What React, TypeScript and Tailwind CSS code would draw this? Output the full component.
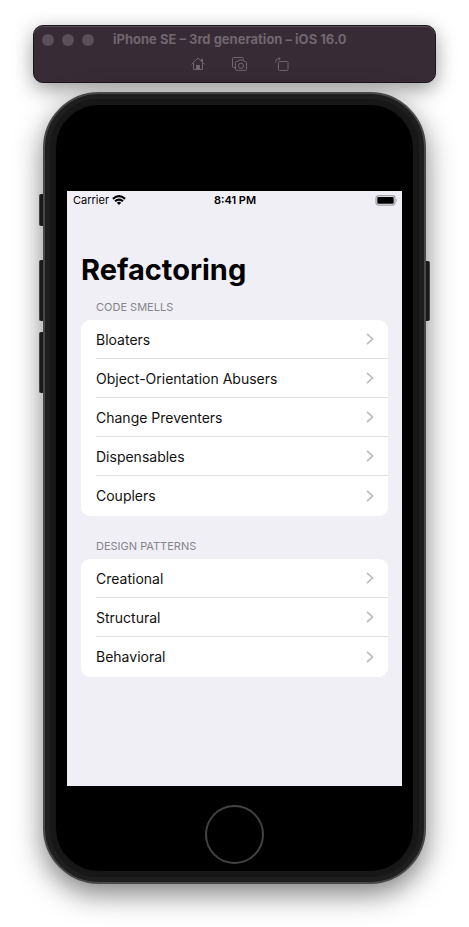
import React from "react";

type Section = { title: string; items: string[] };

const sections: Section[] = [
  {
    title: "Code Smells",
    items: [
      "Bloaters",
      "Object-Orientation Abusers",
      "Change Preventers",
      "Dispensables",
      "Couplers",
    ],
  },
  { title: "Design Patterns", items: ["Creational", "Structural", "Behavioral"] },
];

function HomeIcon() {
  return (
    <svg width="14" height="14" viewBox="0 0 14 14" fill="none" stroke="currentColor" strokeWidth="1">
      <path d="M0.7 7 L7 1 L13.3 7" strokeLinecap="round" strokeLinejoin="round" />
      <path d="M2.5 5.8 V12.5 H11.5 V5.8 M11.5 5 V2.2 H10.5 V4" />
      <path d="M5.5 12.5 V8.5 H8.5 V12.5 Z" fill="currentColor" />
    </svg>
  );
}

function ScreenshotIcon() {
  return (
    <svg width="16" height="14" viewBox="0 0 16 14" fill="none" stroke="currentColor" strokeWidth="1">
      <path d="M3 10.5 H1.5 Q0.5 10.5 0.5 9.5 V1.5 Q0.5 0.5 1.5 0.5 H10.5 Q11.5 0.5 11.5 1.5 V2.5" />
      <path d="M4.5 4.5 H6 L7 3 H11 L12 4.5 H13.5 Q14.5 4.5 14.5 5.5 V12.3 Q14.5 13.3 13.5 13.3 H4.5 Q3.5 13.3 3.5 12.3 V5.5 Q3.5 4.5 4.5 4.5 Z" />
      <circle cx="9" cy="8.8" r="2.6" />
    </svg>
  );
}

function RotateIcon() {
  return (
    <svg width="14" height="14" viewBox="0 0 14 14" fill="none" stroke="currentColor" strokeWidth="1">
      <rect x="3.5" y="4.5" width="9.5" height="9" rx="1" />
      <path d="M0.6 5.5 V4.5 Q0.6 1.8 3.3 1.8 H5" />
      <path d="M3.6 0 L5.8 1.8 L3.6 3.6 Z" fill="currentColor" stroke="none" />
    </svg>
  );
}

function WifiIcon() {
  return (
    <svg width="14" height="10" viewBox="0 0 14 10" fill="none" stroke="#000" strokeWidth="2.1">
      <path d="M0.9 3.9 Q7 -1.5 13.1 3.9" />
      <path d="M3 6.3 Q7 2.9 11 6.3" />
      <path d="M4.8 7.7 Q7 5.9 9.2 7.7 L7 10 Z" fill="#000" stroke="none" />
    </svg>
  );
}

function BatteryIcon() {
  return (
    <svg width="22" height="11" viewBox="0 0 22 11">
      <rect x="1" y="0.7" width="19" height="9.4" rx="2.6" fill="none" stroke="#a3a3a6" strokeWidth="1.3" />
      <rect x="2.3" y="2" width="16.4" height="6.8" rx="1" fill="#000" />
      <path d="M21 3.6 Q22.4 5.4 21 7.2 Z" fill="#a3a3a6" />
    </svg>
  );
}

function Chevron() {
  return (
    <svg width="8" height="12" viewBox="0 0 8 12" fill="none" stroke="#b9b9bc" strokeWidth="1.6">
      <path d="M1.5 1.3 L6.6 6 L1.5 10.7" strokeLinecap="round" strokeLinejoin="round" />
    </svg>
  );
}

function SimulatorToolbar() {
  return (
    <header className="h-[58px] rounded-[10px] border border-[#1b181b] bg-[#372b35] text-[#72666f] shadow-[inset_0_1px_0_#574d55,0_6px_20px_rgba(0,0,0,0.4)]">
      <div className="flex h-7 items-center pl-2">
        <div className="flex gap-2">
          <button aria-label="Close" className="size-3 rounded-full bg-[#5b4f59]" />
          <button aria-label="Minimize" className="size-3 rounded-full bg-[#5b4f59]" />
          <button aria-label="Zoom" className="size-3 rounded-full bg-[#5b4f59]" />
        </div>
        <h1 className="ml-[19px] text-[13px] font-bold whitespace-nowrap">
          iPhone SE – 3rd generation – iOS 16.0
        </h1>
      </div>
      <div className="flex h-5 items-center justify-center gap-[27px] pl-[11px]">
        <button aria-label="Home"><HomeIcon /></button>
        <button aria-label="Save screen"><ScreenshotIcon /></button>
        <button aria-label="Rotate"><RotateIcon /></button>
      </div>
    </header>
  );
}

function SectionList({ title, items }: Section) {
  return (
    <section className="mb-[21px]">
      <h3 className="h-[22px] pl-[15px] text-[11px] leading-[18px] text-[#85858b] uppercase">{title}</h3>
      <ul className="overflow-hidden rounded-[9px] bg-white pb-px">
        {items.map((item, i) => (
          <li key={item} className="pl-[15px]">
            <a
              href="#"
              className={`flex h-[39px] items-center justify-between pr-[14px] text-[14px] text-[#111] ${
                i < items.length - 1 ? "border-b border-[#e1e1e3]" : ""
              }`}
            >
              {item}
              <Chevron />
            </a>
          </li>
        ))}
      </ul>
    </section>
  );
}

function Screen() {
  return (
    <main className="h-[595px] bg-[#f0eff5] text-black">
      <div className="grid h-[18px] grid-cols-3 items-center pr-[5px] pl-[6px] text-[11px]">
        <span className="flex items-center gap-[3px]">
          Carrier <WifiIcon />
        </span>
        <span className="text-center font-semibold">8:41 PM</span>
        <span className="flex justify-end"><BatteryIcon /></span>
      </div>
      <div className="px-[14px] pt-[41px]">
        <h2 className="mb-2 text-[29px] leading-10 font-bold">Refactoring</h2>
        {sections.map((s) => (
          <SectionList key={s.title} {...s} />
        ))}
      </div>
    </main>
  );
}

function Phone() {
  const key = "absolute w-[5px] bg-[#222] border-[#555]";
  return (
    <div className="relative mx-[10px] mt-[9px]">
      <div className={`${key} top-[102px] -left-1 h-8 rounded-l-[2px] border-l`} />
      <div className={`${key} top-[168px] -left-1 h-[61px] rounded-l-[2px] border-l`} />
      <div className={`${key} top-[240px] -left-1 h-[61px] rounded-l-[2px] border-l`} />
      <div className={`${key} top-[169px] -right-1 h-[60px] rounded-r-[2px] border-r`} />
      <div className="relative rounded-[56px] border-2 border-[#484848] bg-[#1e1e1e] p-[5px] shadow-[0_10px_28px_rgba(0,0,0,0.5)]">
        <div className="rounded-[49px] border-[6px] border-[#171717] bg-black px-[11px] pt-[86px] pb-[7px]">
          <Screen />
          <button
            aria-label="Home button"
            className="mx-auto mt-[19px] block size-[59px] rounded-full border-2 border-[#424242]"
          />
        </div>
      </div>
    </div>
  );
}

export default function App() {
  return (
    <div className="min-h-screen bg-white px-[33px] pt-[25px] pb-[42px] font-['Inter','Liberation_Sans',sans-serif]">
      <SimulatorToolbar />
      <Phone />
    </div>
  );
}
